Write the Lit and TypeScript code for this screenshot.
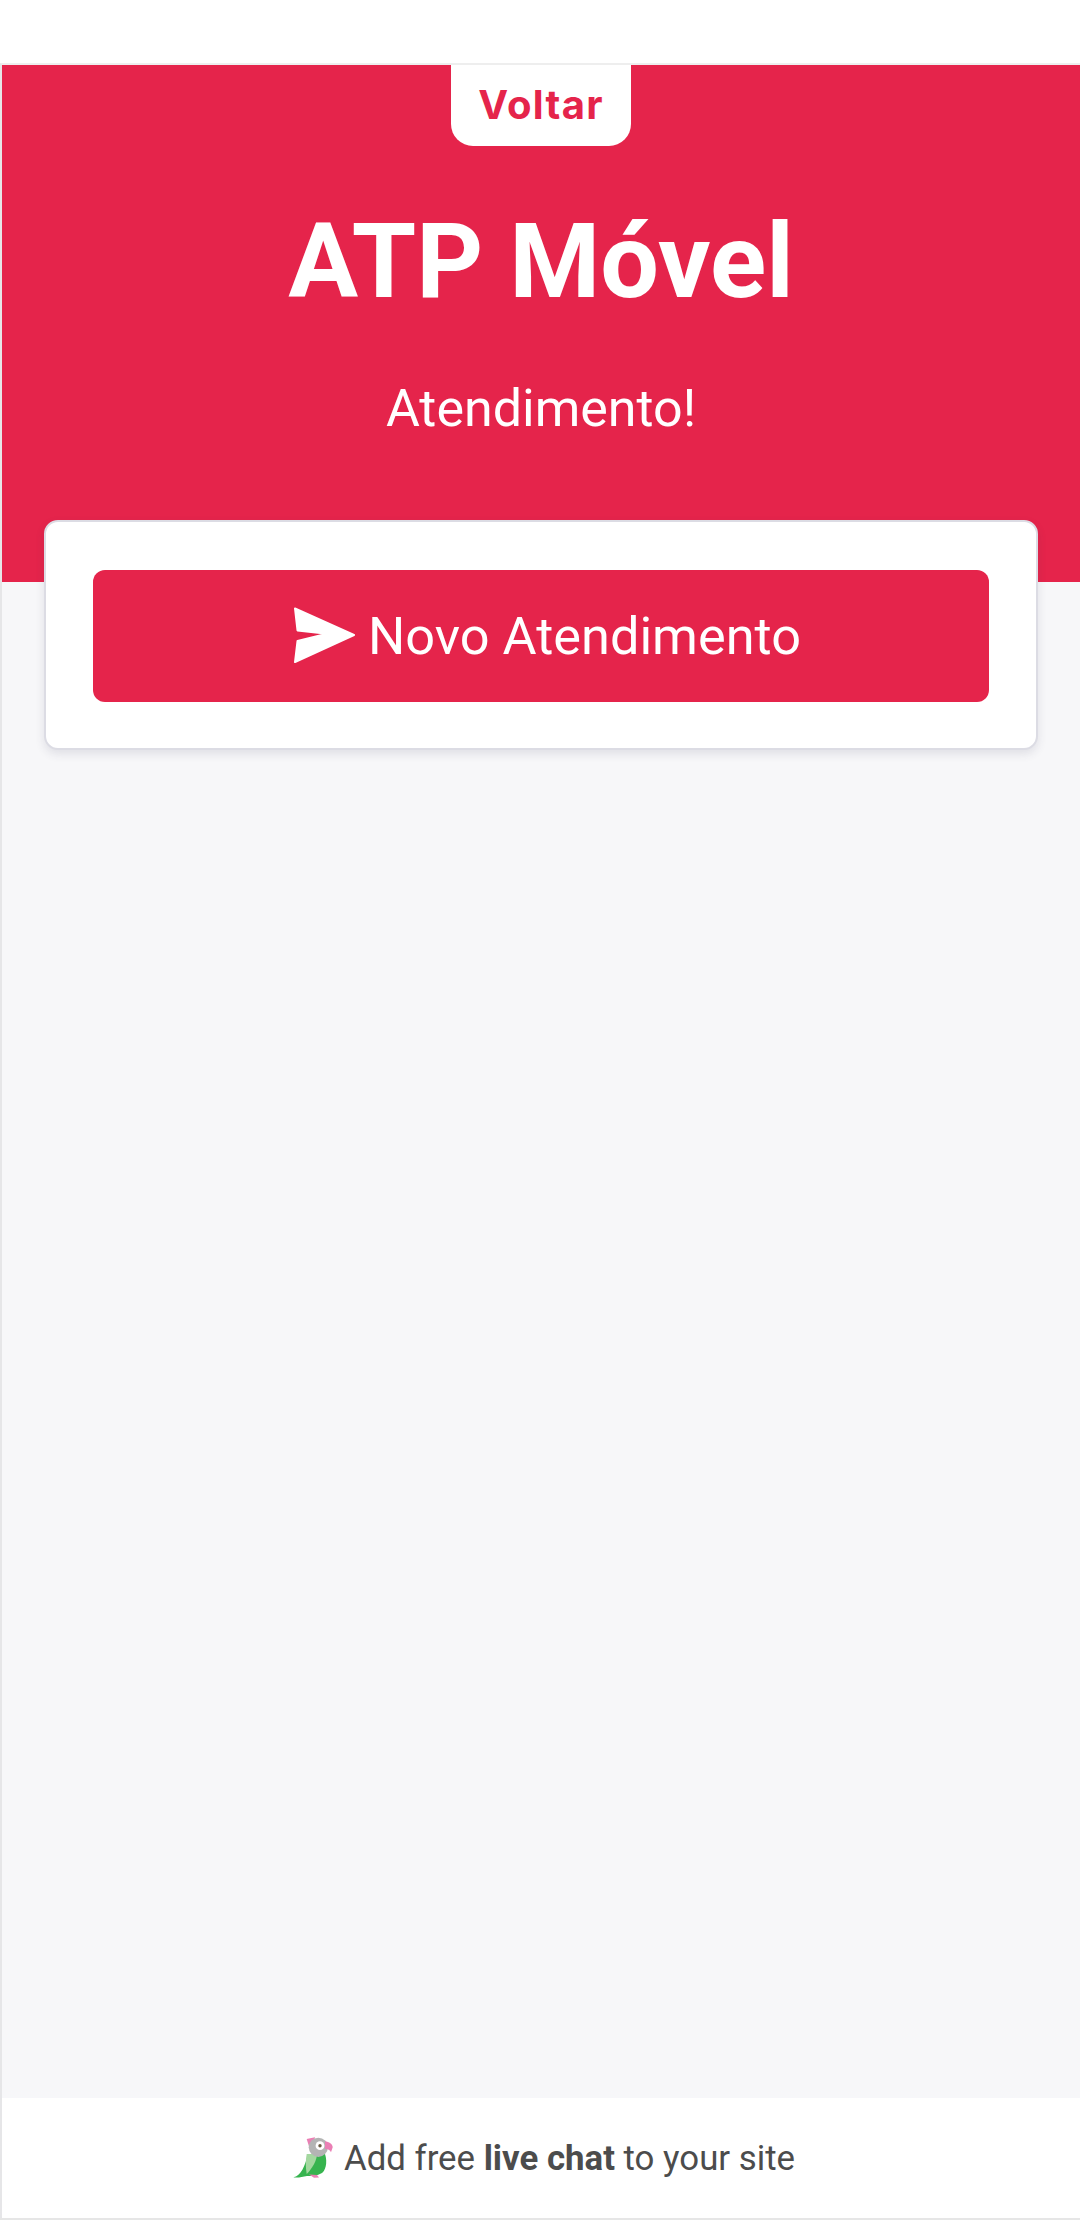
import { LitElement, html, css } from 'lit';
import { customElement } from 'lit/decorators.js';

@customElement('app-root')
export class AppRoot extends LitElement {
  static styles = css`
    :host {
      display: block;
      height: 2220px;
      overflow: hidden;
      background: #fff;
      font-family: Roboto, "Liberation Sans", sans-serif;
    }
    .frame {
      height: 2220px;
      box-sizing: border-box;
      padding-top: 63px;
      display: flex;
      flex-direction: column;
      border-bottom: 2px solid #e6e6e6;
    }
    .chat {
      flex: 1;
      display: flex;
      flex-direction: column;
      border-top: 2px solid #eeeeee;
      border-left: 2px solid #e6e6e8;
      background: #f7f7f9;
    }
    .hero {
      height: 517px;
      background: #e5244b;
      color: #fff;
      display: flex;
      flex-direction: column;
      align-items: center;
    }
    .back {
      width: 180px;
      height: 81px;
      box-sizing: border-box;
      padding-top: 16px;
      background: #fff;
      border-radius: 0 0 22px 22px;
      color: #e5244b;
      font: 700 40px/48px Inter, "Open Sans", sans-serif;
      letter-spacing: 1.3px;
      text-align: center;
    }
    h1 {
      margin: 56px 0 0;
      font-size: 104px;
      line-height: 120px;
      font-weight: 700;
    }
    .sub {
      margin-top: 57px;
      font-size: 52px;
      line-height: 60px;
    }
    .body {
      flex: 1;
      padding: 0 42px;
    }
    .card {
      margin-top: -62px;
      height: 230px;
      box-sizing: border-box;
      padding: 48px 47px 0;
      position: relative;
      background: #fff;
      border: 2px solid #dcdce4;
      border-radius: 14px;
      box-shadow: 0 4px 10px rgba(60, 60, 90, 0.12);
    }
    .btn {
      height: 132px;
      box-sizing: border-box;
      padding-left: 13px;
      display: flex;
      align-items: center;
      justify-content: center;
      gap: 12px;
      background: #e5244b;
      color: #fff;
      border-radius: 12px;
      font-size: 52.3px;
    }
    .btn svg {
      width: 62px;
      height: 56px;
      margin-bottom: 3px;
      display: block;
    }
    .foot {
      height: 120px;
      box-sizing: border-box;
      padding-left: 5px;
      display: flex;
      align-items: center;
      justify-content: center;
      gap: 10px;
      background: #fff;
      color: #4c4c4c;
      font-size: 34.8px;
    }
    .foot svg {
      width: 42px;
      height: 44px;
      display: block;
    }
    b {
      font-weight: 700;
    }
  `;

  render() {
    return html`
      <div class="frame">
        <div class="chat">
          <div class="hero">
            <div class="back">Voltar</div>
            <h1>ATP Móvel</h1>
            <div class="sub">Atendimento!</div>
          </div>
          <div class="body">
            <div class="card">
              <div class="btn">
                <svg viewBox="0 0 62 56">
                  <path fill="#fff" stroke="#fff" stroke-width="2" stroke-linejoin="round" d="M1 1.5 60 28 1 55 3.5 34 33 26.8 3.5 23.5Z" />
                </svg>
                <span>Novo Atendimento</span>
              </div>
            </div>
          </div>
          <div class="foot">
            <svg viewBox="0 0 42 44">
              <path fill="#37b44f" d="M1.3 41.3C9 40 13 30 16 18L33 18C36 27 33 35 30 37 25 40 20 40 15 40 10 41 6 42 1.3 41.3Z" />
              <path fill="#a4d8a0" d="M14.7 18 25 18C25 24 20 33 14.7 38 13.5 31 13.5 24 14.7 18Z" />
              <path fill="#ea7fb4" d="M14.7 3 23 1.3 21 9.7 17.3 11.3Z" />
              <circle cx="26.3" cy="11.3" r="9.6" fill="#b4b4b4" />
              <circle cx="28" cy="9.7" r="4.4" fill="#fff" />
              <circle cx="28" cy="9.7" r="1.7" fill="#6a5a40" />
              <path fill="#ea7fb4" d="M33 5.3C37 6 40.7 8 40.7 11.3L39 16.3C38 14 36 13 33 13Z" />
              <path fill="#ea7fb4" d="M17 38.5 25 39 27 41.5 22 41.8Z" />
            </svg>
            <span>Add free <b>live chat</b> to your site</span>
          </div>
        </div>
      </div>
    `;
  }
}
